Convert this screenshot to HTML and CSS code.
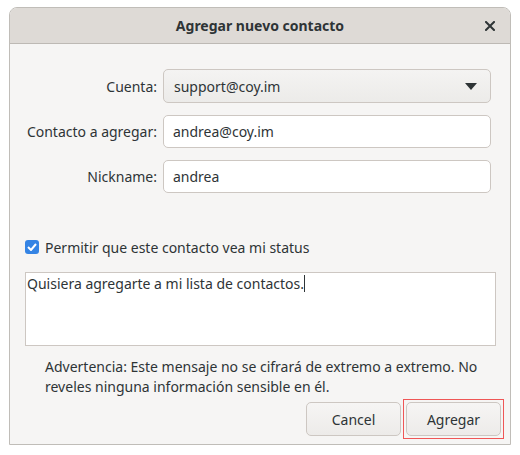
FILE: index.html
```html
<!DOCTYPE html>
<html lang="es">
<head>
<meta charset="utf-8">
<link rel="stylesheet" href="styles.css">
</head>
<body>
<div class="window">
  <div class="titlebar">
    <span class="title">Agregar nuevo contacto</span>
    <span class="close">
      <svg width="10" height="10" viewBox="0 0 10 10"><path d="M1 1L9 9M9 1L1 9" stroke="#2e3436" stroke-width="2" stroke-linecap="square"/></svg>
    </span>
  </div>
  <div class="content">
    <div class="form">
      <label class="lbl">Cuenta:</label>
      <div class="combo">
        <span>support@coy.im</span>
        <svg width="12" height="7" viewBox="0 0 12 7"><path d="M0 0H12L6 7Z" fill="#2e3436"/></svg>
      </div>
      <label class="lbl">Contacto a agregar:</label>
      <div class="entry">andrea@coy.im</div>
      <label class="lbl">Nickname:</label>
      <div class="entry">andrea</div>
    </div>
    <div class="check-row">
      <span class="checkbox">
        <svg width="10" height="8" viewBox="0 0 10 8"><path d="M1 4L4 7L9 1" stroke="#fff" stroke-width="2" fill="none"/></svg>
      </span>
      <span>Permitir que este contacto vea mi status</span>
    </div>
    <div class="textarea">Quisiera agregarte a mi lista de contactos.<span class="caret"></span></div>
    <p class="warning">Advertencia: Este mensaje no se cifrará de extremo a extremo. No reveles ninguna información sensible en él.</p>
    <div class="buttons">
      <button class="btn">Cancel</button>
      <span class="focus-ring"><button class="btn">Agregar</button></span>
    </div>
  </div>
</div>
</body>
</html>
```
FILE: styles.css
```css
* { box-sizing: border-box; }
html, body { margin: 0; padding: 0; background: #ffffff; }
body {
  font-family: "Noto Sans", "Open Sans", sans-serif;
  font-size: 14px;
  color: #2e3436;
}
.window {
  margin: 7px 0 0 9px;
  width: 502px;
  height: 438px;
  border: 1px solid #c0bdb8;
  border-radius: 8px 8px 0 0;
  background: #f6f5f4;
  display: flex;
  flex-direction: column;
}
.titlebar {
  height: 36px;
  background: #dedad6;
  border-bottom: 1px solid #bdb9b4;
  border-radius: 7px 7px 0 0;
  display: flex;
  align-items: center;
  justify-content: center;
  position: relative;
}
.title { font-weight: bold; font-size: 14px; }
.close {
  position: absolute;
  right: 15px;
  top: 13px;
  width: 10px;
  height: 10px;
  display: flex;
}
.content {
  padding: 25px 6px 0 15px;
  display: flex;
  flex-direction: column;
}
.form {
  display: grid;
  grid-template-columns: 132px 1fr;
  column-gap: 6px;
  row-gap: 12px;
  padding-right: 13px;
}
.lbl {
  text-align: right;
  align-self: center;
}
.combo {
  height: 34px;
  border: 1px solid #cdc7c2;
  border-radius: 5px;
  background: linear-gradient(#f4f3f2, #ecebe9);
  display: flex;
  align-items: center;
  justify-content: space-between;
  padding: 0 13px 0 10px;
}
.entry {
  height: 33px;
  border: 1px solid #cdc7c2;
  border-radius: 5px;
  background: #ffffff;
  display: flex;
  align-items: center;
  padding: 0 9px;
}
.check-row {
  margin-top: 46px;
  display: flex;
  align-items: center;
  gap: 6px;
  height: 16px;
}
.checkbox {
  width: 14px;
  height: 14px;
  border-radius: 3px;
  background: #3584e4;
  display: flex;
  align-items: center;
  justify-content: center;
}
.textarea {
  margin: 17px 8px 0 0;
  height: 74px;
  border: 1px solid #cdc7c2;
  background: #ffffff;
  padding: 1px 0 0 1px;
  line-height: 20px;
}
.caret {
  display: inline-block;
  width: 1px;
  height: 17px;
  background: #2e3436;
  vertical-align: -3px;
}
.warning {
  margin: 11px 18px 0 20px;
  line-height: 20px;
}
.buttons {
  margin-top: 2px;
  display: flex;
  justify-content: flex-end;
  align-items: center;
  gap: 2px;
}
.btn {
  font: inherit;
  color: #2e3436;
  height: 34px;
  width: 95px;
  border: 1px solid #cdc7c2;
  border-radius: 5px;
  background: linear-gradient(#f6f5f4, #edebe9);
}
.focus-ring {
  display: flex;
  padding: 2px;
  border: 1px solid #ef5656;
}
```
